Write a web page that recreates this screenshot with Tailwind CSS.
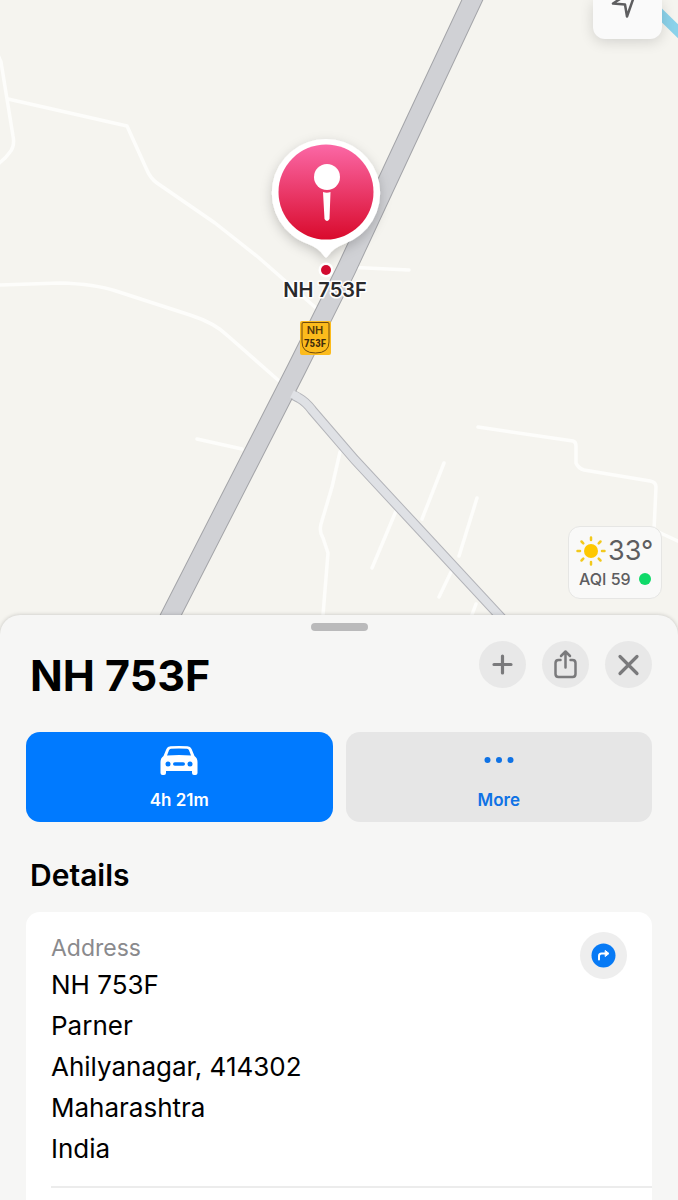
<!DOCTYPE html>
<html lang="en">
<head>
  <meta charset="UTF-8">
  <meta name="viewport" content="width=device-width, initial-scale=1">
  <title>NH 753F</title>
  <script src="https://cdn.jsdelivr.net/npm/@tailwindcss/browser@4"></script>
</head>
<body class="h-screen overflow-hidden flex flex-col bg-[#f5f4ef] text-black font-['Inter',sans-serif]">

  <!-- Map -->
  <section class="relative h-[640px] shrink-0">
    <svg class="block w-full h-full" viewBox="0 0 678 640" preserveAspectRatio="xMidYMin slice">
      <defs>
        <linearGradient id="pinFill" x1="0" y1="0" x2="0" y2="1">
          <stop offset="0" stop-color="#fb68a6"/>
          <stop offset="1" stop-color="#d90a2c"/>
        </linearGradient>
        <filter id="pinShadow" x="-30%" y="-30%" width="160%" height="160%">
          <feDropShadow dx="0" dy="4" stdDeviation="6" flood-color="#000" flood-opacity="0.2"/>
        </filter>
      </defs>

      <!-- small roads -->
      <g fill="none" stroke="#fdfdfb" stroke-width="3.500" stroke-linecap="round" stroke-linejoin="round">
        <path d="M-2 55 L1 62 L13 136 Q15 146 10 152 Q6 158 -2 164"/>
        <path d="M8 99 L127 126 L146 168 Q150 178 157 183 L215 223 L258 257 L316 308"/>
        <path d="M-2 285 L60 283 Q95 284 116 291 L190 315 Q215 323 228 336 L278 380"/>
        <path d="M197 439 L242 449"/>
        <path d="M340 452 L332 487 L321 524 Q319 532 323 538 L328 553 L321 640"/>
        <path d="M345 267 L409 270"/>
        <path d="M478 427 L573 441 Q576 442 576 446 L576 463 Q578 468 584 470 L650 481 Q656 482 656 487 L654 530 L680 542"/>
        <path d="M444 463 L422 519 M396 511 L372 568"/>
        <path d="M477 498 L459 556 M451 572 L439 597 M476 604 L470 620"/>
      </g>

      <!-- river -->
      <path d="M646 0 L690 43" stroke="#8bd2ea" stroke-width="10" fill="none"/>

      <!-- side road -->
      <path d="M286 391 L299 398 Q306 402 312 410 L355 460 L420 530 L520 638" fill="none" stroke="#b3b4b9" stroke-width="10"/>
      <path d="M286 391 L299 398 Q306 402 312 410 L355 460 L420 530 L520 638" fill="none" stroke="#dfe1e5" stroke-width="8"/>

      <!-- highway -->
      <path d="M477 -10 L416 120 L346 270 L296 370 L158 640" fill="none" stroke="#a3a4a8" stroke-width="20"/>
      <path d="M477 -10 L416 120 L346 270 L296 370 L158 640" fill="none" stroke="#d0d1d5" stroke-width="18"/>
      <path d="M292 394 L298 397" stroke="#dfe1e5" stroke-width="8"/>

      <!-- highway shield -->
      <rect x="300" y="321" width="31" height="34" rx="2" fill="#fcbb1c"/>
      <path d="M303 322.500 H328 Q329 322.500 329 324 V342 Q329 353 315.500 353 Q302 353 302 342 V324 Q302 322.500 303 322.500 Z" fill="none" stroke="#704a0c" stroke-width="1"/>
      <text x="315" y="334" text-anchor="middle" font-size="11" font-weight="600" fill="#55390b">NH</text>
      <text x="315" y="347" text-anchor="middle" font-size="11" font-weight="700" fill="#3f2b0c" font-family="'Roboto Condensed', Roboto, sans-serif">753F</text>

      <!-- pin -->
      <g filter="url(#pinShadow)">
        <path d="M326 139 A54 54 0 0 1 344 244 Q333 248 328 256 Q326 259 324 256 Q319 248 308 244 A54 54 0 0 1 326 139 Z" fill="#fff"/>
      </g>
      <circle cx="326" cy="192" r="47.500" fill="url(#pinFill)"/>
      <circle cx="327" cy="177" r="13" fill="#fff"/>
      <path d="M323 192 Q327 193.500 330.500 192 L329.500 219 Q327 223 324.500 219 Z" fill="#fff"/>
      <circle cx="326" cy="270" r="7.500" fill="#fff"/>
      <circle cx="326" cy="270" r="5" fill="#d20b30"/>
      <text x="325" y="297" text-anchor="middle" font-size="20" font-weight="600" fill="#29292c" stroke="#fff" stroke-width="3" stroke-linejoin="round" paint-order="stroke">NH 753F</text>
    </svg>

    <button class="absolute top-0 right-4 w-[69px] h-[39px] bg-[#fafafa] rounded-b-xl shadow-[0_3px_14px_rgba(0,0,0,0.14)]" aria-label="Current location">
      <svg class="block w-full h-full" viewBox="0 0 69 39" fill="none" stroke="#5e5e60" stroke-width="2.500" stroke-linejoin="round">
        <path d="M44 -12 L20 3.500 L32 4.500 L34 16.500 Z"/>
      </svg>
    </button>

    <div class="absolute right-4 bottom-[41px] w-[94px] h-[73px] pt-2 px-[7px] bg-[#f9f9f8] border border-[#e6e6e4] rounded-xl text-[#5d5d60]">
      <div class="flex items-center gap-0.5 h-8 text-[27px] whitespace-nowrap">
        <svg class="w-[30px] h-[30px] shrink-0" viewBox="0 0 30 30" fill="none" stroke="#f2c91d" stroke-width="2.500" stroke-linecap="round">
          <circle cx="15" cy="15" r="7" fill="#fec800" stroke="none"/>
          <path d="M15 1.500 V4 M15 26 V28.500 M1.500 15 H4 M26 15 H28.500 M5.500 5.500 L7.300 7.300 M22.700 22.700 L24.500 24.500 M24.500 5.500 L22.700 7.300 M7.300 22.700 L5.500 24.500"/>
        </svg>
        <span>33°</span>
      </div>
      <div class="flex items-center justify-between h-6 px-[3px] text-base font-medium">
        <span>AQI 59</span>
        <span class="size-3 rounded-full bg-[#0fd968]"></span>
      </div>
    </div>
  </section>

  <!-- Place sheet -->
  <main class="relative -mt-[25px] flex-1 flex flex-col px-[26px] pt-2 bg-[#f6f6f5] rounded-t-[20px] shadow-[0_0_4px_rgba(0,0,0,0.2)]">
    <div class="mx-auto w-[57px] h-2 rounded-full bg-[#bababb]"></div>

    <header class="mt-2.5 pl-1 flex items-start justify-between">
      <h1 class="text-[43px] leading-[68px] font-bold">NH 753F</h1>
      <div class="flex gap-4 text-[#7a7a7c]">
        <button class="size-[47px] rounded-full bg-[#e8e8e8]" aria-label="Add">
          <svg class="w-full h-full" viewBox="0 0 47 47" fill="none" stroke="currentColor" stroke-width="3.200" stroke-linecap="round">
            <path d="M23.500 15 V32 M15 23.500 H32"/>
          </svg>
        </button>
        <button class="size-[47px] rounded-full bg-[#e8e8e8]" aria-label="Share">
          <svg class="w-full h-full" viewBox="0 0 47 47" fill="none" stroke="currentColor" stroke-width="2.500" stroke-linecap="round" stroke-linejoin="round">
            <path d="M18.500 19 H16.500 Q13.500 19 13.500 22 V33 Q13.500 36 16.500 36 H30.500 Q33.500 36 33.500 33 V22 Q33.500 19 30.500 19 H28.500"/>
            <path d="M23.500 26.500 V11 M19 15 L23.500 10.500 L28 15"/>
          </svg>
        </button>
        <button class="size-[47px] rounded-full bg-[#e8e8e8]" aria-label="Close">
          <svg class="w-full h-full" viewBox="0 0 47 47" fill="none" stroke="currentColor" stroke-width="3.200" stroke-linecap="round">
            <path d="M15 15.500 L32 32.500 M32 15.500 L15 32.500"/>
          </svg>
        </button>
      </div>
    </header>

    <div class="mt-[23px] grid grid-cols-2 gap-[13px] text-[17px] leading-6 font-semibold">
      <button class="h-[90px] pt-3 flex flex-col items-center gap-3 rounded-[14px] bg-[#007aff] text-white">
        <svg class="w-[38px] h-8" viewBox="0 0 38 32">
          <path fill="#fff" fill-rule="evenodd" d="M10.500 2.300 Q19 1.500 27.500 2.300 Q30.500 2.600 31.600 5 L34.500 12 Q37.500 14 37.500 18 V29 Q37.500 31 35.500 31 H34 Q32 31 32 29 V27 H6 V29 Q6 31 4 31 H2.500 Q.5 31 .5 29 V18 Q.5 14 3.500 12 L6.400 5 Q7.500 2.600 10.500 2.300 Z M11 4.800 Q9.500 5 9 6.200 L7 11.500 Q19 10.300 31 11.500 L29 6.200 Q28.500 5 27 4.800 Q19 4.100 11 4.800 Z"/>
          <g fill="#007aff">
            <circle cx="8" cy="20" r="2.500"/>
            <circle cx="30" cy="20" r="2.500"/>
            <rect x="13" y="18.200" width="12" height="3.600" rx="1.800"/>
          </g>
        </svg>
        <span>4h 21m</span>
      </button>
      <button class="h-[90px] pt-3 flex flex-col items-center gap-3 rounded-[14px] bg-[#e6e6e6] text-[#0f72e5]">
        <svg class="w-[38px] h-8" viewBox="0 0 38 32" fill="currentColor">
          <circle cx="7.500" cy="16" r="3"/>
          <circle cx="19" cy="16" r="3"/>
          <circle cx="30.500" cy="16" r="3"/>
        </svg>
        <span>More</span>
      </button>
    </div>

    <h2 class="mt-[35px] pl-1 text-[30px] leading-9 font-semibold">Details</h2>

    <div class="mt-[19px] flex-1 pl-[25px] bg-white rounded-t-[14px]">
      <div class="flex items-start justify-between pt-5 pb-[17px] pr-[25px] border-b-2 border-[#ececec]">
        <div>
          <p class="text-[23px] leading-8 text-[#8a8a8d]">Address</p>
          <address class="not-italic text-[26px] leading-[41px]">
            NH 753F<br>
            Parner<br>
            Ahilyanagar, 414302<br>
            Maharashtra<br>
            India
          </address>
        </div>
        <button class="size-[47px] rounded-full bg-[#eeeeee]" aria-label="Directions">
          <svg class="w-full h-full" viewBox="0 0 47 47" fill="none" stroke="#fff" stroke-width="2" stroke-linecap="round" stroke-linejoin="round">
            <circle cx="23.500" cy="23.500" r="12" fill="#077af5" stroke="none"/>
            <path d="M19 27.500 V24 Q19 21.500 21.500 21.500 H26"/>
            <path d="M25.500 18.700 L29 21.500 L25.500 24.300 Z" fill="#fff" stroke-width="1"/>
          </svg>
        </button>
      </div>
    </div>
  </main>

</body>
</html>
